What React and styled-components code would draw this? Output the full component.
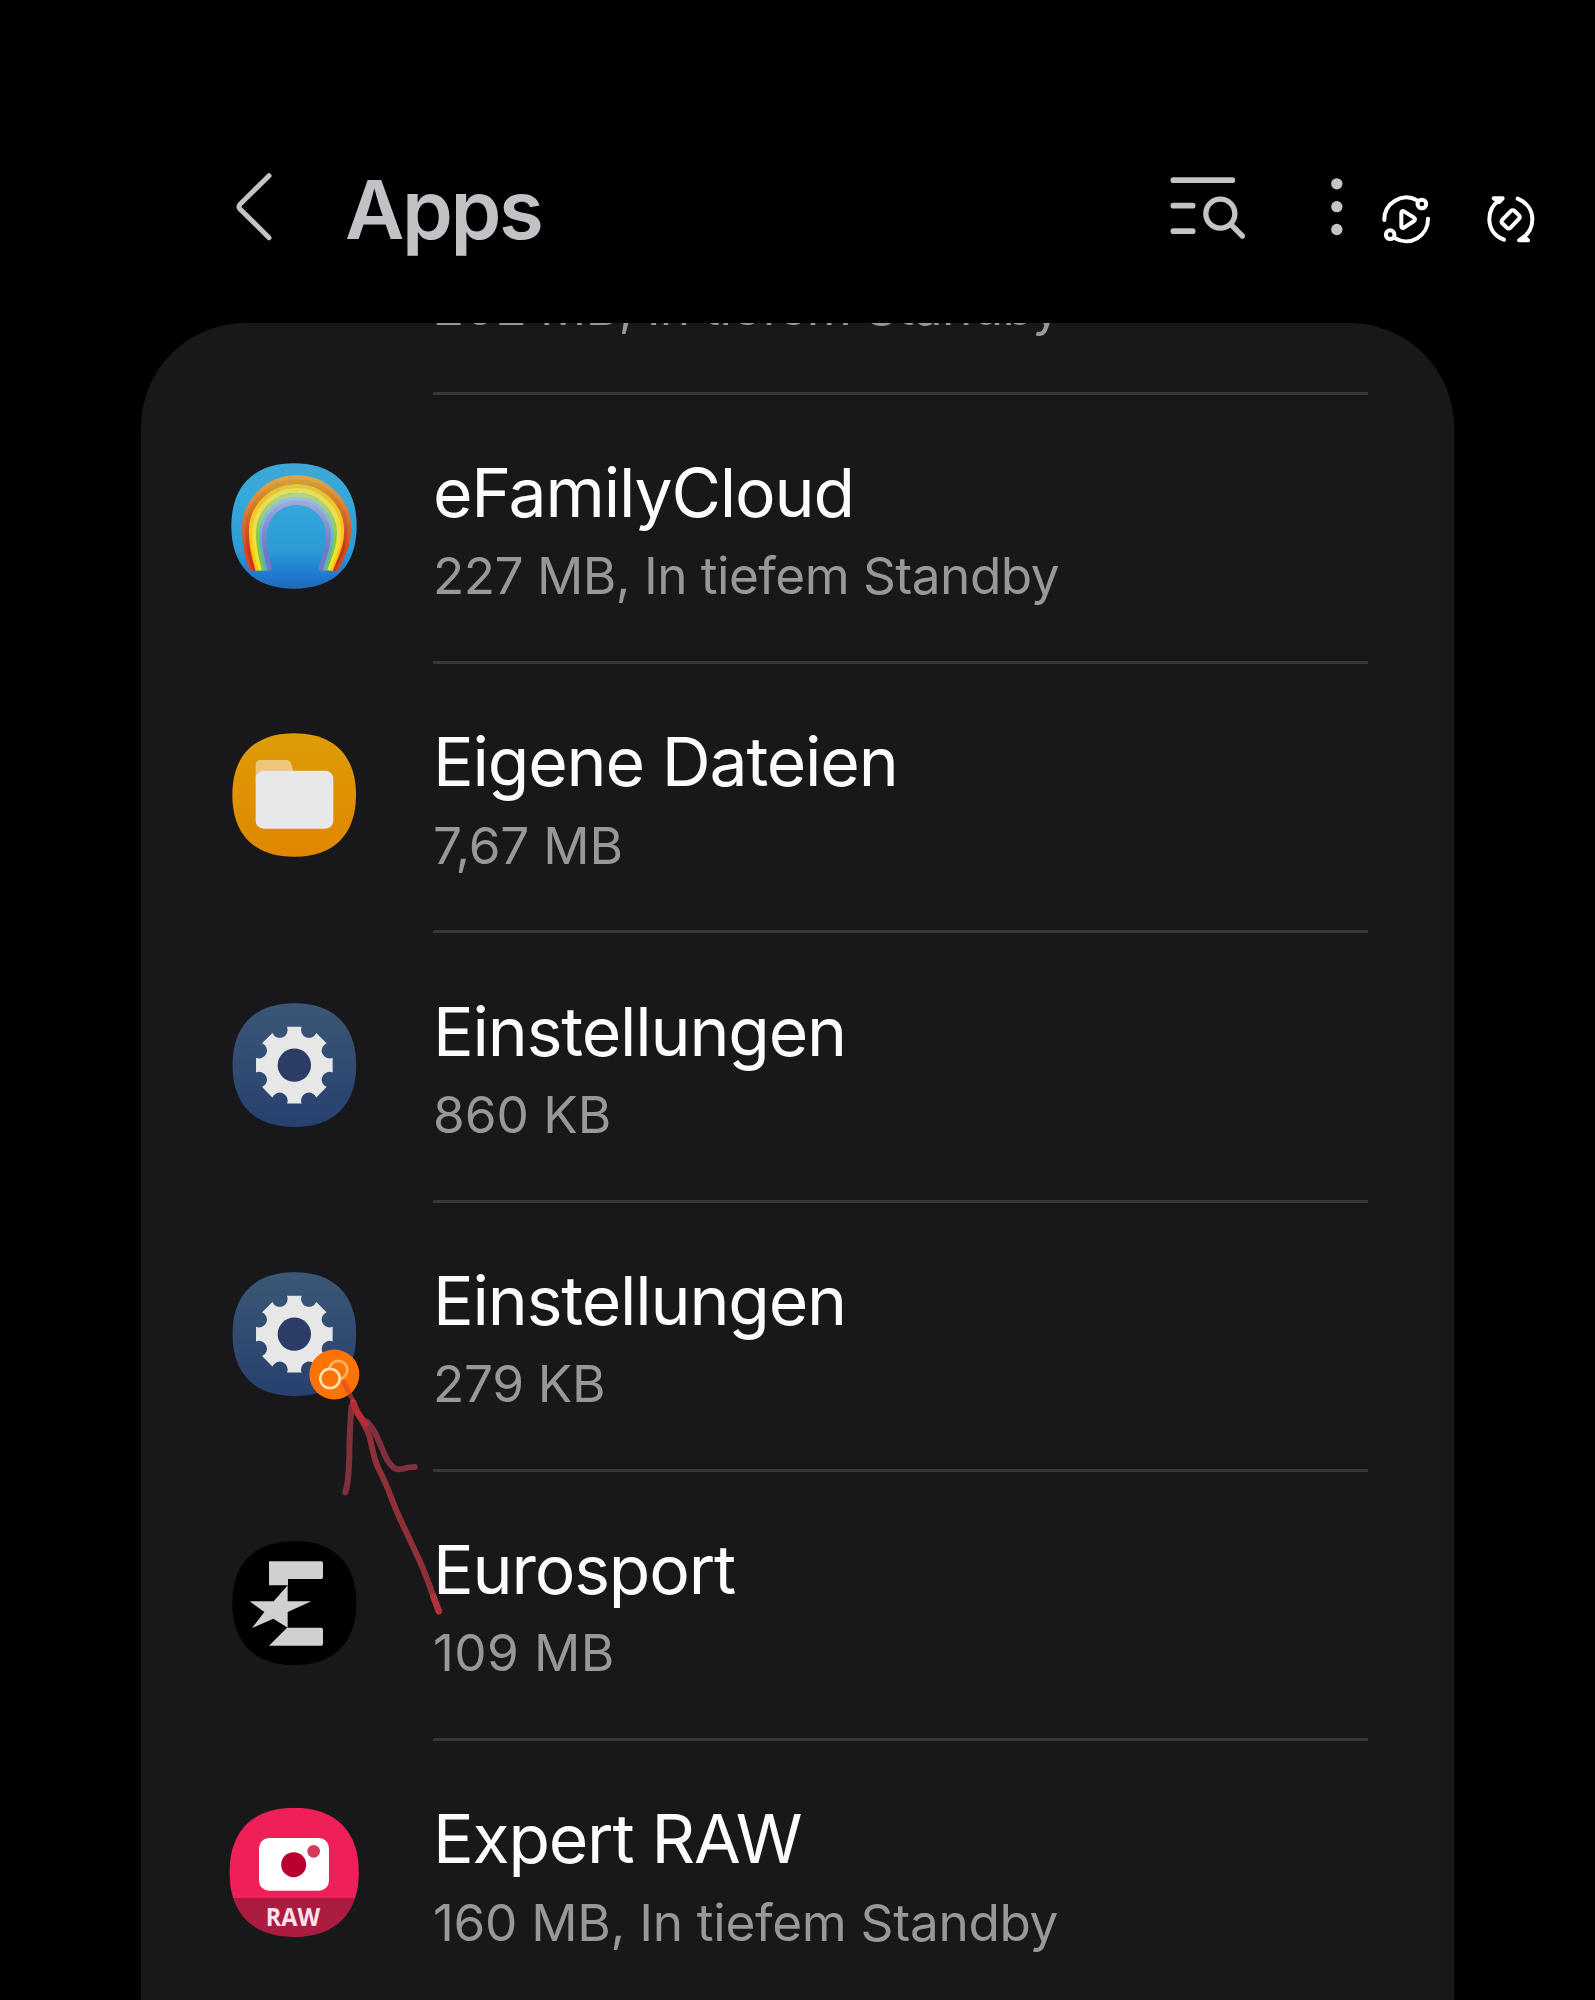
import React from "react"
import styled, { createGlobalStyle } from "styled-components"

const GlobalStyle = createGlobalStyle`
	* {
		box-sizing: border-box;
	}

	html,
	body {
		margin: 0;
		background: #000;
	}
`

const Screen = styled.div`
	position: relative;
	display: flex;
	flex-direction: column;
	width: 1595px;
	height: 2000px;
	overflow: hidden;
	background: #000;
	font-family: Inter, Roboto, sans-serif;
`

const Header = styled.header`
	display: flex;
	flex: none;
	align-items: flex-start;
	height: 323px;
	padding: 173px 59px 0 235px;
	color: #c4c4c4;

	svg {
		display: block;
		flex: none;
	}
`

const Title = styled.h1`
	margin: -12.5px 0 0 70px;
	font-size: 81.6px;
	font-weight: 600;
	line-height: 98px;
	letter-spacing: -2.4px;
	color: #c3c1c6;
`

const Actions = styled.div`
	display: flex;
	gap: 77px;
	margin-left: auto;
`

const QuickToggles = styled.div`
	display: flex;
	gap: 52px;
	margin-left: 33px;
	color: #fff;
`

const Panel = styled.main`
	flex: 1;
	width: 1313px;
	margin-left: 141px;
	overflow: hidden;
	border-radius: 104px 104px 0 0;
	background: #18181a;
`

/* scrolled up, so the first row is only partly visible */
const AppList = styled.ul`
	margin: -197.45px 0 0;
	padding: 0 86px 0 69px;
	list-style: none;
`

const AppRow = styled.li`
	display: flex;
	gap: 53px;
	height: 269.25px;
`

const IconSlot = styled.div`
	flex: none;
	width: 170px;
	padding-top: 46.2px;

	svg {
		display: block;
		overflow: visible;
	}
`

const AppText = styled.div`
	flex: 1;
	padding-top: 57.2px;
	border-bottom: 3px solid #363638;
	white-space: nowrap;
`

const AppName = styled.div`
	height: 80px;
	font-size: 67.8px;
	line-height: 80px;
	letter-spacing: -1.17px;
	color: #fcfcfc;
`

const AppInfo = styled.div`
	margin-top: 11.3px;
	font-size: 51.3px;
	line-height: 64px;
	letter-spacing: ${(props) => props.$spacing || 0}px;
	color: #98989a;
`

const Scribble = styled.svg`
	position: absolute;
	left: 330px;
	top: 1370px;
	pointer-events: none;
`

function BackIcon() {
	return (
		<svg width="40" height="70" viewBox="105 99 120 210" fill="none">
			<path
				d="M207 107L120 193Q114 200 120 207L207 293"
				stroke="currentColor"
				strokeWidth="15"
				strokeLinecap="round"
			/>
		</svg>
	)
}

function ListSearchIcon() {
	return (
		<svg width="85" height="77" viewBox="75 69 255 231" fill="none" stroke="currentColor" strokeLinecap="round">
			<path d="M100 90.5H277M100 167H158M100 243.5H158" strokeWidth="17" />
			<circle cx="241" cy="191" r="43.5" strokeWidth="16" />
			<path d="M273 224L307 258" strokeWidth="16" />
		</svg>
	)
}

function MoreIcon() {
	return (
		<svg width="20" height="77" viewBox="561 69 60 231" fill="currentColor">
			<circle cx="590.5" cy="101.5" r="17" />
			<circle cx="590.5" cy="170" r="17" />
			<circle cx="590.5" cy="238.5" r="17" />
		</svg>
	)
}

function RoutineIcon() {
	return (
		<svg
			width="52"
			height="77"
			viewBox="720 69 156 231"
			fill="none"
			stroke="currentColor"
			strokeWidth="12"
			strokeLinecap="round"
			strokeLinejoin="round"
		>
			<path d="M733 210A66 66 0 0 1 831 151" />
			<path d="M864 206A66 66 0 0 1 765 265" />
			<circle cx="845.5" cy="162" r="13" />
			<circle cx="750.5" cy="254" r="13" />
			<path d="M784 189Q784 180 792 184L822 203Q828 208 822 213L792 233Q784 237 784 228Z" />
		</svg>
	)
}

function RotateIcon() {
	return (
		<svg
			width="52"
			height="77"
			viewBox="1032 69 156 231"
			fill="none"
			stroke="currentColor"
			strokeWidth="12"
			strokeLinecap="round"
			strokeLinejoin="round"
		>
			<path d="M1092 269C1063 258 1048 235 1048 208C1048 184 1059 164 1077 152" />
			<path d="M1061 145H1088L1078 156Z" fill="currentColor" />
			<path d="M1133 146C1160 157 1177 180 1177 208C1177 232 1166 251 1148 264" />
			<path d="M1164 271H1137L1153 260Z" fill="currentColor" />
			<rect x="1086" y="191" width="52" height="34" rx="7" transform="rotate(-46 1112 208)" />
		</svg>
	)
}

// rounded "squircle" tile that every launcher icon sits on
function squircle(cx, cy, r) {
	const k = r * 0.64
	return (
		`M${cx - r} ${cy}C${cx - r} ${cy - k} ${cx - k} ${cy - r} ${cx} ${cy - r}` +
		`S${cx + r} ${cy - k} ${cx + r} ${cy}S${cx + k} ${cy + r} ${cx} ${cy + r}` +
		`S${cx - r} ${cy + k} ${cx - r} ${cy}Z`
	)
}

const bands = [
	{ t: 0.06, top: "#d9a54a", bottom: "#d9481f" },
	{ t: 0.2, top: "#dd9d27", bottom: "#c8371a" },
	{ t: 0.36, top: "#e6c33c", bottom: "#ffc814" },
	{ t: 0.5, top: "#e3dc62", bottom: "#f0e03a" },
	{ t: 0.66, top: "#c3d69a", bottom: "#7cc443" },
	{ t: 0.8, top: "#a9c9dd", bottom: "#58aed0" },
	{ t: 0.92, top: "#b4c0e6", bottom: "#7277c4" },
]

function arch(t) {
	const mix = (a, b) => a + (b - a) * t
	const left = mix(99, 168)
	const right = mix(421, 350)
	const top = mix(107, 195)
	const side = mix(262, 290)
	const mid = (left + right) / 2
	const k = mix(86, 52)
	return (
		`M${mix(122, 184)} 391C${mix(108, 174)} 350 ${left} 320 ${left} ${side}` +
		`C${left} ${side - k} ${mid - k} ${top} ${mid} ${top}` +
		`S${right} ${side - k} ${right} ${side}` +
		`C${right} 320 ${mix(398, 338)} 350 ${mix(381, 326)} 391`
	)
}

function RainbowIcon() {
	return (
		<svg width="170" height="170" viewBox="0 3 510 510">
			<defs>
				<linearGradient id="sky" x1="0" y1="0" x2="0" y2="1">
					<stop offset="0" stopColor="#3fa6d3" />
					<stop offset="0.25" stopColor="#36a9dc" />
					<stop offset="0.7" stopColor="#2a9bd6" />
					<stop offset="0.9" stopColor="#1f78d0" />
					<stop offset="1" stopColor="#2269b4" />
				</linearGradient>
				{bands.map((band, i) => (
					<linearGradient
						key={i}
						id={`band${i}`}
						gradientUnits="userSpaceOnUse"
						x1="0"
						y1="120"
						x2="0"
						y2="330"
					>
						<stop offset="0" stopColor={band.top} />
						<stop offset="1" stopColor={band.bottom} />
					</linearGradient>
				))}
			</defs>
			<path d={squircle(252, 258, 188)} fill="url(#sky)" />
			{bands.map((band, i) => (
				<path key={i} d={arch(band.t)} fill="none" stroke={`url(#band${i})`} strokeWidth="14" />
			))}
		</svg>
	)
}

function FolderIcon() {
	return (
		<svg width="170" height="170" viewBox="0 1 510 510">
			<defs>
				<linearGradient id="amber" x1="0" y1="0" x2="0" y2="1">
					<stop offset="0" stopColor="#dd9c06" />
					<stop offset="1" stopColor="#e08600" />
				</linearGradient>
			</defs>
			<path d={squircle(252.5, 256, 185.5)} fill="url(#amber)" />
			<path d="M137 220V166Q137 151 152 151H229Q241 151 244 164L250 182V220Z" fill="#ebc67c" />
			<rect x="137" y="183" width="233" height="174" rx="24" fill="#e9e8e8" />
		</svg>
	)
}

function gearPath(cx, cy) {
	const point = (deg) => {
		const a = (deg * Math.PI) / 180
		return `${cx + 117 * Math.sin(a)} ${cy - 117 * Math.cos(a)}`
	}
	let d = ""
	for (let i = 0; i < 8; i++) {
		const deg = i * 45
		d += i === 0 ? `M${point(-10.8)}` : `A23 23 0 0 0 ${point(deg - 10.8)}`
		d += `L${point(deg + 10.8)}`
	}
	return d + `A23 23 0 0 0 ${point(-10.8)}Z`
}

function SettingsIcon({ dual }) {
	return (
		<svg width="170" height="170" viewBox="0 -1.5 510 510">
			<defs>
				<linearGradient id="navy" x1="0" y1="0" x2="0" y2="1">
					<stop offset="0" stopColor="#3b5775" />
					<stop offset="1" stopColor="#27406f" />
				</linearGradient>
			</defs>
			<path d={squircle(253, 254, 185.5)} fill="url(#navy)" />
			<path d={gearPath(253, 254)} fill="#e7e7e8" />
			<circle cx="253" cy="254" r="50" fill="#2b3c67" />
			{dual && (
				<g fill="none" strokeWidth="8">
					<circle cx="373" cy="375" r="75" fill="#fd7305" />
					<circle cx="385" cy="361" r="27" stroke="#ffb35e" />
					<circle cx="360" cy="387" r="29" stroke="#ffe3b0" fill="#fd7305" />
				</g>
			)}
		</svg>
	)
}

function EurosportIcon() {
	return (
		<svg width="170" height="170" viewBox="0 -6 510 510">
			<path d={squircle(253, 249, 186)} fill="#000" />
			<g fill="#d0d0d0">
				<path d="M177 124H334Q339 124 339 130V172Q339 177 334 177H234V196H177Z" />
				<path d="M233 196V244H304L233 276V323L190 296L126 324L163 276L119 244H191Z" />
				<path d="M231 323H334Q339 323 339 329V371Q339 377 334 377H177Z" />
			</g>
		</svg>
	)
}

const RawLabel = styled.text`
	font-family: "Open Sans", "Noto Sans", sans-serif;
	font-size: 77px;
	font-weight: 700;
	fill: #fde3ec;
`

function ExpertRawIcon() {
	return (
		<svg width="170" height="170" viewBox="0 -8 510 510">
			<defs>
				<clipPath id="rawTile">
					<path d={squircle(252.5, 248, 194)} />
				</clipPath>
			</defs>
			<g clipPath="url(#rawTile)">
				<rect x="50" y="50" width="410" height="277" fill="#ef2057" />
				<rect x="50" y="326" width="410" height="130" fill="#ab1c40" />
			</g>
			<rect x="147" y="145" width="210" height="158" rx="30" fill="#fff" />
			<circle cx="251" cy="225" r="37.5" fill="#b9002f" />
			<circle cx="311" cy="185" r="19" fill="#d63a58" />
			<RawLabel x="249" y="408" textAnchor="middle" textLength="163" lengthAdjust="spacingAndGlyphs">
				RAW
			</RawLabel>
		</svg>
	)
}

const apps = [
	{ info: "202 MB, In tiefem Standby", spacing: -0.6 },
	{ name: "eFamilyCloud", info: "227 MB, In tiefem Standby", spacing: -0.53, icon: <RainbowIcon /> },
	{ name: "Eigene Dateien", info: "7,67 MB", spacing: -0.2, icon: <FolderIcon /> },
	{ name: "Einstellungen", info: "860 KB", icon: <SettingsIcon /> },
	{ name: "Einstellungen", info: "279 KB", spacing: -0.3, icon: <SettingsIcon dual /> },
	{ name: "Eurosport", info: "109 MB", spacing: 0.4, icon: <EurosportIcon /> },
	{ name: "Expert RAW", info: "160 MB, In tiefem Standby", spacing: -0.3, icon: <ExpertRawIcon /> },
]

function App() {
	return (
		<Screen>
			<GlobalStyle />
			<Header>
				<BackIcon />
				<Title>Apps</Title>
				<Actions>
					<ListSearchIcon />
					<MoreIcon />
				</Actions>
				<QuickToggles>
					<RoutineIcon />
					<RotateIcon />
				</QuickToggles>
			</Header>
			<Panel>
				<AppList>
					{apps.map((app, i) => (
						<AppRow key={i}>
							<IconSlot>{app.icon}</IconSlot>
							<AppText>
								<AppName>{app.name}</AppName>
								<AppInfo $spacing={app.spacing}>{app.info}</AppInfo>
							</AppText>
						</AppRow>
					))}
				</AppList>
			</Panel>
			{/* hand drawn arrow pointing at the dual app badge */}
			<Scribble width="120" height="250" viewBox="360 360 360 750" fill="none" strokeLinecap="round" strokeLinejoin="round">
				<g stroke="#80303a" strokeWidth="18">
					<path d="M424 470C420 530 418 570 418 620C415 660 418 690 406 727" />
					<path d="M470 515C500 540 510 590 532 630C548 656 560 662 580 656C595 650 605 652 614 651" />
					<path
						d="M430 465C445 500 470 525 480 565C490 610 495 640 515 675C535 715 545 750 565 795C590 850 610 890 630 935C655 990 670 1040 686 1085"
						stroke="#8f3038"
					/>
				</g>
				<path d="M430 458C436 480 448 500 466 520" stroke="#b52c36" strokeWidth="20" />
				<path d="M402 398L428 450" stroke="#d8403a" strokeWidth="14" opacity="0.6" />
				<path d="M670 1040L687 1083" stroke="#c4333f" strokeWidth="20" opacity="0.7" />
			</Scribble>
		</Screen>
	)
}

export default App
